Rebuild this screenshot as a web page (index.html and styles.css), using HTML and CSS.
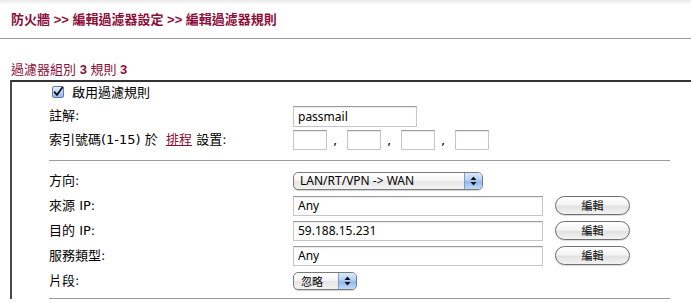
FILE: index.html
```html
<!DOCTYPE html>
<html lang="zh-Hant">
<head>
<meta charset="utf-8">
<title>編輯過濾器規則</title>
<link rel="stylesheet" href="styles.css">
</head>
<body>
<div class="topband"></div>
<div class="crumb">防火牆 <b>&gt;&gt;</b> 編輯過濾器設定 <b>&gt;&gt;</b> 編輯過濾器規則</div>
<div class="heading">過濾器組別 <b>3</b> 規則 <b>3</b></div>
<div class="box">
  <div class="row r-check">
    <span class="cb"><svg width="12" height="12" viewBox="0 0 12 12"><defs><linearGradient id="cbg" x1="0" y1="0" x2="0" y2="1"><stop offset="0" stop-color="#e9f2fd"/><stop offset="1" stop-color="#8fb8ec"/></linearGradient></defs><rect x="0.5" y="0.5" width="11" height="11" rx="1.5" fill="url(#cbg)" stroke="#5e7fae"/><path d="M2.6 6.2 L5 9 L10.3 1.6" fill="none" stroke="#111" stroke-width="1.8" stroke-linecap="round" stroke-linejoin="round"/></svg></span>
    <span>啟用過濾規則</span>
  </div>
  <div class="row r-top">
    <div class="lbl">註解:</div>
    <div class="ctl"><input class="inp w-note" type="text" value="passmail"></div>
  </div>
  <div class="row r-top">
    <div class="lbl">索引號碼(1-15) 於&nbsp;&nbsp;<a class="link" href="#">排程</a> 設置:</div>
    <div class="ctl">
      <input class="inp w-idx" type="text" value=""><span class="comma">,</span>
      <input class="inp w-idx" type="text" value=""><span class="comma">,</span>
      <input class="inp w-idx" type="text" value=""><span class="comma">,</span>
      <input class="inp w-idx" type="text" value="">
    </div>
  </div>
  <div class="sep sep-1"></div>
  <div class="rows-b">
    <div class="row r-b">
      <div class="lbl">方向:</div>
      <div class="ctl">
        <div class="sel w-dir"><span class="sel-text">LAN/RT/VPN -&gt; WAN</span><span class="sel-arrows"><svg width="7" height="10" viewBox="0 0 7 10"><path d="M3.5 0.5 L6.5 4 L0.5 4 Z M0.5 6 L6.5 6 L3.5 9.5 Z" fill="#111"/></svg></span></div>
      </div>
    </div>
    <div class="row r-b">
      <div class="lbl">來源 IP:</div>
      <div class="ctl"><input class="inp w-long" type="text" value="Any"><button class="btn" type="button">編輯</button></div>
    </div>
    <div class="row r-b">
      <div class="lbl">目的 IP:</div>
      <div class="ctl"><input class="inp w-long" type="text" value="59.188.15.231"><button class="btn" type="button">編輯</button></div>
    </div>
    <div class="row r-b">
      <div class="lbl">服務類型:</div>
      <div class="ctl"><input class="inp w-long" type="text" value="Any"><button class="btn" type="button">編輯</button></div>
    </div>
    <div class="row r-b">
      <div class="lbl">片段:</div>
      <div class="ctl">
        <div class="sel w-frag"><span class="sel-text sel-cjk">忽略</span><span class="sel-arrows"><svg width="7" height="10" viewBox="0 0 7 10"><path d="M3.5 0.5 L6.5 4 L0.5 4 Z M0.5 6 L6.5 6 L3.5 9.5 Z" fill="#111"/></svg></span></div>
      </div>
    </div>
  </div>
  <div class="sep sep-2"></div>
</div>
</body>
</html>
```
FILE: styles.css
```css
html, body {
  margin: 0;
  padding: 0;
  background: #fff;
  overflow: hidden;
}
body {
  font-family: "DejaVu Sans", "Noto Sans CJK TC", sans-serif;
  font-size: 13px;
  color: #000;
}
.topband {
  height: 4px;
  background: linear-gradient(#ececec, #fafafa);
}
.crumb {
  padding: 7px 0 9px 11px;
  line-height: 18px;
  font-family: "Liberation Sans", "Noto Sans CJK TC", sans-serif;
  color: #8c0f3a;
  font-weight: bold;
  border-bottom: 1px solid #9a9a9a;
  white-space: nowrap;
}
.heading {
  margin: 22px 0 1px 11px;
  line-height: 18px;
  font-family: "Liberation Sans", "Noto Sans CJK TC", sans-serif;
  color: #8c0f3a;
  white-space: nowrap;
}
.heading b {
  font-weight: bold;
}
.box {
  margin-left: 10px;
  border-top: 2px solid #333;
  border-left: 2px solid #4a4a4a;
  padding-left: 37px;
}
.row {
  display: flex;
  align-items: center;
  white-space: nowrap;
}
.r-check {
  height: 19px;
  padding-left: 3px;
}
.cb {
  display: flex;
  width: 12px;
  height: 12px;
  margin-right: 8px;
}
.r-top {
  height: 24px;
}
.r-top:nth-child(2) {
  margin-top: 3px;
}
.lbl {
  width: 244px;
  flex: none;
  line-height: 18px;
}
.ctl {
  display: flex;
  align-items: center;
}
.link {
  color: #8c0f3a;
  text-decoration: underline;
}
.inp {
  box-sizing: border-box;
  margin: 0;
  padding: 0 4px;
  font-family: "Noto Sans", sans-serif;
  font-size: 12px;
  color: #000;
  background: #fff;
  border: 1px solid #c6c6c6;
  border-top-color: #9c9c9c;
  box-shadow: inset 0 1px 1px rgba(0,0,0,0.08);
  outline: none;
}
.w-note {
  width: 124px;
  height: 21px;
}
.w-idx {
  width: 34px;
  height: 20px;
}
.comma {
  width: 20px;
  padding-left: 6px;
  box-sizing: border-box;
  font-size: 13px;
  line-height: 20px;
  padding-top: 2px;
}
.w-long {
  width: 250px;
  height: 20px;
}
.sep {
  width: 621px;
  height: 1px;
  background: #9c9c9c;
}
.sep-1 {
  margin-top: 8px;
}
.rows-b {
  margin-top: 7px;
}
.r-b {
  height: 25px;
}
.sep-2 {
  margin-top: 5px;
}
.btn {
  box-sizing: border-box;
  margin: 0 0 0 12px;
  width: 75px;
  height: 19px;
  padding: 0;
  border: 1px solid #6e6e6e;
  border-radius: 10px;
  background: linear-gradient(#ffffff 0%, #f4f4f4 45%, #e2e2e2 55%, #f2f2f2 100%);
  box-shadow: 0 1px 1px rgba(0,0,0,0.15);
  font-family: "Noto Sans CJK TC", sans-serif;
  font-size: 11px;
  line-height: 17px;
  color: #000;
}
.sel {
  box-sizing: border-box;
  display: flex;
  align-items: stretch;
  height: 18px;
  border: 1px solid #7a7a7a;
  border-radius: 5px;
  background: linear-gradient(#ffffff 0%, #f5f5f5 45%, #e6e6e6 55%, #f3f3f3 100%);
  box-shadow: 0 1px 1px rgba(0,0,0,0.18);
  overflow: hidden;
}
.w-dir {
  width: 190px;
}
.w-frag {
  width: 64px;
}
.sel-text {
  flex: 1;
  padding-left: 6px;
  font-family: "Noto Sans", sans-serif;
  font-size: 12px;
  line-height: 16px;
}
.sel-cjk {
  font-family: "Noto Sans CJK TC", sans-serif;
  font-size: 11px;
  padding-left: 7px;
}
.sel-arrows {
  width: 17px;
  display: flex;
  align-items: center;
  justify-content: center;
  border-left: 1px solid #7d9fcf;
  background: linear-gradient(#dbe9fb 0%, #b5d1f5 45%, #8fb7ee 55%, #c4dcf8 100%);
}
```
